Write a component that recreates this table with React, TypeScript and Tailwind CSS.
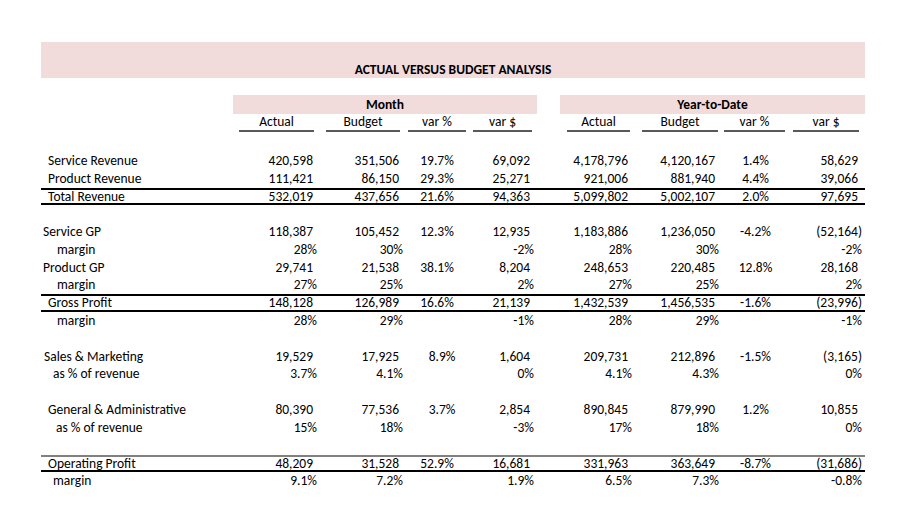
import React from "react";

type Row = {
  label?: string;
  indent?: string;
  vals?: string[];
  line?: "both" | "op";
};

const rows: Row[] = [
  { label: "Service Revenue", indent: "pl-[7px]", vals: ["420,598", "351,506", "19.7%", "69,092", "4,178,796", "4,120,167", "1.4%", "58,629"] },
  { label: "Product Revenue", indent: "pl-[7px]", vals: ["111,421", "86,150", "29.3%", "25,271", "921,006", "881,940", "4.4%", "39,066"] },
  { label: "Total Revenue", indent: "pl-[7px]", vals: ["532,019", "437,656", "21.6%", "94,363", "5,099,802", "5,002,107", "2.0%", "97,695"], line: "both" },
  {},
  { label: "Service GP", indent: "pl-[2px]", vals: ["118,387", "105,452", "12.3%", "12,935", "1,183,886", "1,236,050", "-4.2%", "(52,164)"] },
  { label: "margin", indent: "pl-[16px]", vals: ["28%", "30%", "", "-2%", "28%", "30%", "", "-2%"] },
  { label: "Product GP", indent: "pl-[2px]", vals: ["29,741", "21,538", "38.1%", "8,204", "248,653", "220,485", "12.8%", "28,168"] },
  { label: "margin", indent: "pl-[16px]", vals: ["27%", "25%", "", "2%", "27%", "25%", "", "2%"] },
  { label: "Gross Profit", indent: "pl-[7px]", vals: ["148,128", "126,989", "16.6%", "21,139", "1,432,539", "1,456,535", "-1.6%", "(23,996)"], line: "both" },
  { label: "margin", indent: "pl-[16px]", vals: ["28%", "29%", "", "-1%", "28%", "29%", "", "-1%"] },
  {},
  { label: "Sales & Marketing", indent: "pl-[3px]", vals: ["19,529", "17,925", "8.9%", "1,604", "209,731", "212,896", "-1.5%", "(3,165)"] },
  { label: "as % of revenue", indent: "pl-[12px]", vals: ["3.7%", "4.1%", "", "0%", "4.1%", "4.3%", "", "0%"] },
  {},
  { label: "General & Administrative", indent: "pl-[7px]", vals: ["80,390", "77,536", "3.7%", "2,854", "890,845", "879,990", "1.2%", "10,855"] },
  { label: "as % of revenue", indent: "pl-[15px]", vals: ["15%", "18%", "", "-3%", "17%", "18%", "", "0%"] },
  {},
  { label: "Operating Profit", indent: "pl-[7px]", vals: ["48,209", "31,528", "52.9%", "16,681", "331,963", "363,649", "-8.7%", "(31,686)"], line: "op" },
  { label: "margin", indent: "pl-[12px]", vals: ["9.1%", "7.2%", "", "1.9%", "6.5%", "7.3%", "", "-0.8%"] },
];

const grid =
  "grid grid-cols-[192px_87px_86px_62px_69px_23px_75px_87px_67px_76px]";

const heads = [
  { text: "Actual", m: "ml-[6px] mr-[6px]" },
  { text: "Budget", m: "ml-[6px] mr-[6px]" },
  { text: "var %", m: "ml-[2px] mr-[2px]" },
  { text: "var $", m: "ml-[5px] mr-[5px]" },
  { text: "Actual", m: "ml-[7px] mr-[5px]" },
  { text: "Budget", m: "ml-[7px] mr-[4px]" },
  { text: "var %", m: "ml-[2px] mr-[4px]" },
  { text: "var $", m: "ml-[4px] mr-[6px]" },
];

function Cell({ v, col }: { v: string; col: number }) {
  if (col === 2) {
    return (
      <div className={`text-center ${v.length === 4 ? "pl-[10px]" : ""}`}>{v}</div>
    );
  }
  if (col === 6) return <div className="text-center">{v}</div>;
  const plain = /^[\d,]+$/.test(v);
  return <div className={`text-right ${plain ? "pr-[7px]" : "pr-[3px]"}`}>{v}</div>;
}

export default function App() {
  return (
    <div
      className="w-[900px] h-[519px] bg-white pl-[41px] pt-[42px] text-black text-[13.5px] leading-[16px]"
      style={{ fontFamily: "Carlito, Calibri, Lato, sans-serif" }}
    >
      <div className="w-[824px]">
        <div className="h-[36px] bg-[#f2dcdb] flex items-end justify-center font-bold">
          ACTUAL VERSUS BUDGET ANALYSIS
        </div>

        <div className={`${grid} mt-[17px] h-[19px] font-bold`}>
          <div />
          <div className="col-span-4 bg-[#f2dcdb] flex items-center justify-center">
            Month
          </div>
          <div />
          <div className="col-span-4 bg-[#f2dcdb] flex items-center justify-center">
            Year-to-Date
          </div>
        </div>

        <div className={grid}>
          <div />
          {heads.map((h, i) => (
            <React.Fragment key={i}>
              {i === 4 && <div />}
              <div className={`${h.m} h-[18px] border-b-2 border-[#595959] text-center`}>
                {h.text}
              </div>
            </React.Fragment>
          ))}
        </div>

        <div className="mt-[20px] flex flex-col leading-[14px]">
          {rows.map((r, i) => {
            const lines =
              r.line === "both"
                ? "border-t-2 border-b-2 border-black"
                : r.line === "op"
                  ? "border-t-2 border-t-[#808080] border-b-2 border-b-black"
                  : "";
            return (
              <div key={i} className={`${grid} h-[17.8px] items-center ${lines}`}>
                <div className={`${r.indent ?? ""} whitespace-nowrap`}>{r.label}</div>
                {r.vals?.map((v, c) => (
                  <React.Fragment key={c}>
                    {c === 4 && <div />}
                    <Cell v={v} col={c} />
                  </React.Fragment>
                ))}
              </div>
            );
          })}
        </div>
      </div>
    </div>
  );
}
